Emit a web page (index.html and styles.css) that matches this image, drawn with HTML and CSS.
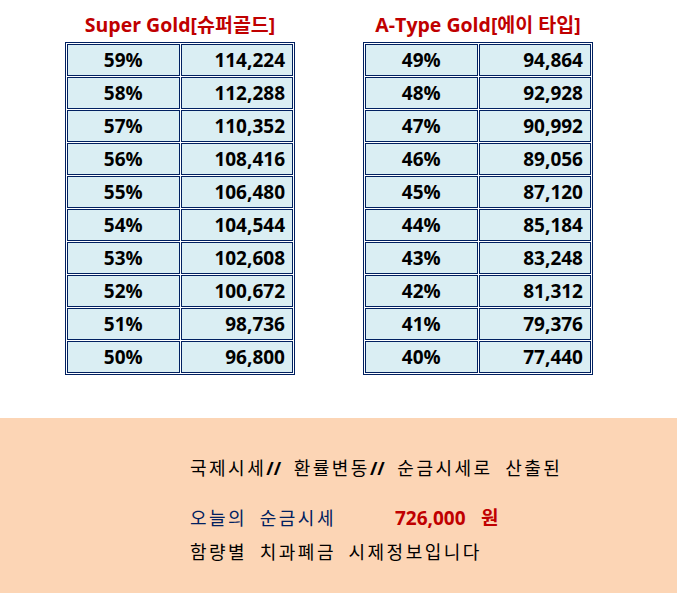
FILE: index.html
```html
<!DOCTYPE html>
<html lang="ko">
<head>
<meta charset="utf-8">
<title>Gold price</title>
<link rel="stylesheet" href="styles.css">
</head>
<body>
<div class="top">
  <section class="block">
    <h2 class="title">Super Gold[슈퍼골드]</h2>
    <table class="grid">
      <tr><td class="pct">59%</td><td class="amt">114,224</td></tr>
      <tr><td class="pct">58%</td><td class="amt">112,288</td></tr>
      <tr><td class="pct">57%</td><td class="amt">110,352</td></tr>
      <tr><td class="pct">56%</td><td class="amt">108,416</td></tr>
      <tr><td class="pct">55%</td><td class="amt">106,480</td></tr>
      <tr><td class="pct">54%</td><td class="amt">104,544</td></tr>
      <tr><td class="pct">53%</td><td class="amt">102,608</td></tr>
      <tr><td class="pct">52%</td><td class="amt">100,672</td></tr>
      <tr><td class="pct">51%</td><td class="amt">98,736</td></tr>
      <tr><td class="pct">50%</td><td class="amt">96,800</td></tr>
    </table>
  </section>
  <section class="block">
    <h2 class="title">A-Type Gold[에이 타입]</h2>
    <table class="grid">
      <tr><td class="pct">49%</td><td class="amt">94,864</td></tr>
      <tr><td class="pct">48%</td><td class="amt">92,928</td></tr>
      <tr><td class="pct">47%</td><td class="amt">90,992</td></tr>
      <tr><td class="pct">46%</td><td class="amt">89,056</td></tr>
      <tr><td class="pct">45%</td><td class="amt">87,120</td></tr>
      <tr><td class="pct">44%</td><td class="amt">85,184</td></tr>
      <tr><td class="pct">43%</td><td class="amt">83,248</td></tr>
      <tr><td class="pct">42%</td><td class="amt">81,312</td></tr>
      <tr><td class="pct">41%</td><td class="amt">79,376</td></tr>
      <tr><td class="pct">40%</td><td class="amt">77,440</td></tr>
    </table>
  </section>
</div>
<div class="band">
  <p class="line">국제시세<span class="sl">//</span> 환률변동<span class="sl">//</span> 순금시세로 산출된</p>
  <p class="line today"><span class="label">오늘의 순금시세</span><span class="price">726,000</span><span class="won">원</span></p>
  <p class="line">함량별 치과폐금 시제정보입니다</p>
</div>
</body>
</html>
```

FILE: styles.css
```css
html, body {
  margin: 0;
  padding: 0;
  background: #ffffff;
}
body {
  width: 677px;
  height: 593px;
  overflow: hidden;
  font-family: "Open Sans", "Noto Sans CJK KR", sans-serif;
  color: #000000;
}
.top {
  display: flex;
  gap: 68px;
  padding-left: 65px;
  height: 418px;
}
.block {
  display: flex;
  flex-direction: column;
  width: 230px;
}
.title {
  margin: 0;
  height: 42px;
  line-height: 50px;
  font-size: 19.5px;
  font-weight: 700;
  color: #c00000;
  text-align: center;
  white-space: nowrap;
}
.grid {
  border-collapse: separate;
  border-spacing: 1px;
  border: 1px solid #002060;
  background: #ffffff;
}
.grid td {
  border: 1px solid #002060;
  background: #daeef3;
  width: 110px;
  height: 30px;
  padding: 0;
  font-size: 19px;
  font-weight: 700;
  line-height: 30px;
}
.grid .pct {
  text-align: center;
}
.grid .amt {
  text-align: right;
  padding-right: 7px;
  width: 103px;
}
.band {
  background: #fcd5b5;
  height: 175px;
  padding: 36px 0 0 190px;
  box-sizing: border-box;
  font-family: "Noto Sans CJK KR", sans-serif;
}
.line {
  margin: 0;
  font-size: 18px;
  line-height: 26px;
  word-spacing: 5px;
  letter-spacing: 2.5px;
  white-space: nowrap;
}
.sl {
  letter-spacing: 0;
  font-family: "Open Sans", sans-serif;
  font-weight: 700;
}
.today {
  display: flex;
  align-items: baseline;
  margin-top: 23px;
  margin-bottom: 7px;
}
.label {
  width: 205px;
  color: #002060;
}
.price {
  width: 86px;
  color: #c00000;
  font-family: "Open Sans", sans-serif;
  font-size: 19px;
  font-weight: 700;
  letter-spacing: 0;
}
.won {
  color: #c00000;
  font-size: 19px;
  font-weight: 700;
}
```
